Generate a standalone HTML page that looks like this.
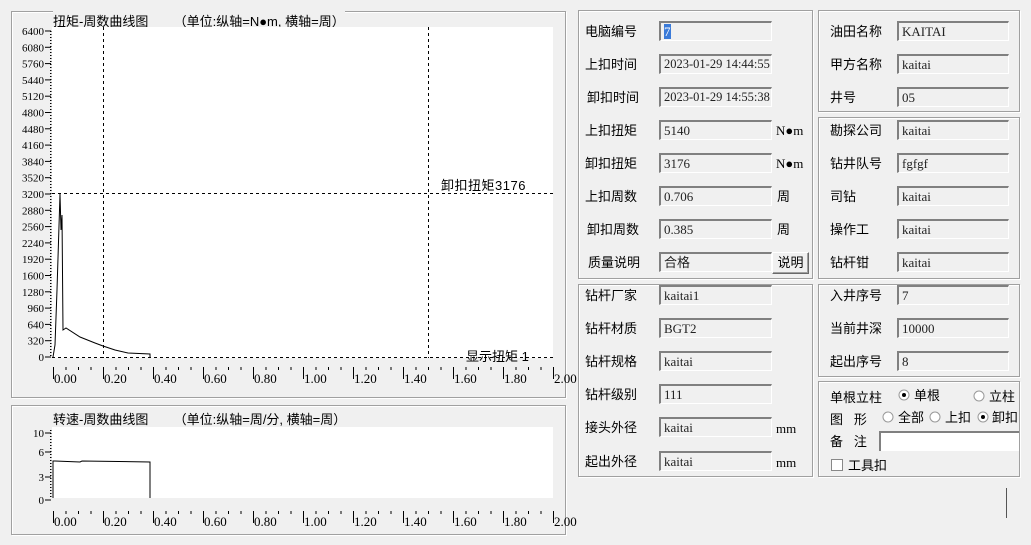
<!DOCTYPE html>
<html><head><meta charset="utf-8">
<style>
*{margin:0;padding:0;box-sizing:border-box}
body{width:1031px;height:545px;background:#f0f0f0;position:relative;overflow:hidden;font-family:"Liberation Sans","Noto Sans CJK SC",sans-serif;font-size:12px;color:#000}
.a{position:absolute;white-space:nowrap}
.p{position:absolute;border:1px solid #a0a0a0;box-shadow:inset 1px 1px 0 #fff,1px 1px 0 #fff}
.l{position:absolute;font-size:13px;line-height:16px;white-space:nowrap}
.i{position:absolute;height:20px;background:#f0f0f0;border-top:2px solid #808080;border-left:2px solid #808080;border-right:1px solid #fff;border-bottom:1px solid #fff;font-family:"Liberation Serif","Noto Sans CJK SC",serif;font-size:13px;line-height:17px;padding-left:3px;color:#222;white-space:nowrap;overflow:hidden}
.u{position:absolute;font-family:"Liberation Serif",serif;font-size:13px}
svg text{font-family:"Liberation Serif",serif;font-size:11px}
svg text.x{font-size:13px}
</style></head><body>

<div class="p" style="left:11px;top:11px;width:555px;height:387px"></div>
<div class="p" style="left:11px;top:405px;width:555px;height:130px"></div>
<div class="a" style="left:53px;top:11px;font-size:13px;background:#f0f0f0">扭矩-周数曲线图&nbsp;&nbsp;&nbsp;&nbsp;&nbsp;&nbsp;&nbsp;（单位:纵轴=N●m, 横轴=周）</div>
<div class="a" style="left:53px;top:409px;font-size:13px">转速-周数曲线图&nbsp;&nbsp;&nbsp;&nbsp;&nbsp;&nbsp;&nbsp;（单位:纵轴=周/分, 横轴=周）</div>

<svg width="1031" height="545" style="position:absolute;left:0;top:0">
<rect x="52" y="27" width="501" height="331" fill="#fff"/>
<rect x="52" y="427" width="501" height="71" fill="#fff"/>
<g stroke="#000" stroke-width="1" fill="none" stroke-dasharray="3,3">
<line x1="103.5" y1="27" x2="103.5" y2="358"/>
<line x1="428.5" y1="27" x2="428.5" y2="358"/>
<line x1="52" y1="193.5" x2="553" y2="193.5"/>
<line x1="52" y1="357.5" x2="553" y2="357.5"/>
</g>
<polyline fill="none" stroke="#000" points="53,357 55,345 57,290 60,194 61,230 62,215 63,330 66,328 80,337 95,343 103,346 115,350 128,353 150,354 150,357"/>
<polyline fill="none" stroke="#000" points="53,498 53,461 55,461 80,462 82,461 150,462 150,498"/>
<g id="tk" stroke="#000" fill="none"></g>
<g id="tx"></g>
</svg>
<div class="a" style="left:441px;top:175px;font-size:13px;letter-spacing:0.5px">卸扣扭矩3176</div>
<div class="a" style="left:466px;top:346px;font-size:13px">显示扭矩 1</div>

<div class="p" style="left:578px;top:10px;width:235px;height:269px"></div>
<div class="p" style="left:578px;top:284px;width:235px;height:193px"></div>
<div class="p" style="left:818px;top:10px;width:202px;height:102px"></div>
<div class="p" style="left:818px;top:117px;width:202px;height:162px"></div>
<div class="p" style="left:818px;top:284px;width:202px;height:93px"></div>
<div class="p" style="left:818px;top:381px;width:202px;height:96px"></div>

<div class="l" style="left:585px;top:24px">电脑编号</div><div class="i" style="left:659px;top:21px;width:113px"><span style="background:#3a7ad8;color:#fff">7</span></div>
<div class="l" style="left:585px;top:57px">上扣时间</div><div class="i" style="left:659px;top:54px;width:113px;font-size:12.5px">2023-01-29 14:44:55</div>
<div class="l" style="left:587px;top:90px">卸扣时间</div><div class="i" style="left:659px;top:87px;width:113px;font-size:12.5px">2023-01-29 14:55:38</div>
<div class="l" style="left:585px;top:123px">上扣扭矩</div><div class="i" style="left:659px;top:120px;width:113px">5140</div><div class="u" style="left:776px;top:123px">N●m</div>
<div class="l" style="left:585px;top:156px">卸扣扭矩</div><div class="i" style="left:659px;top:153px;width:113px">3176</div><div class="u" style="left:776px;top:156px">N●m</div>
<div class="l" style="left:585px;top:189px">上扣周数</div><div class="i" style="left:659px;top:186px;width:113px">0.706</div><div class="l" style="left:777px;top:189px">周</div>
<div class="l" style="left:587px;top:222px">卸扣周数</div><div class="i" style="left:659px;top:219px;width:113px">0.385</div><div class="l" style="left:777px;top:222px">周</div>
<div class="l" style="left:588px;top:255px">质量说明</div><div class="i" style="left:659px;top:252px;width:113px;font-family:'Liberation Sans','Noto Sans CJK SC',sans-serif;font-size:13px">合格</div>
<div class="a" style="left:772px;top:252px;width:37px;height:22px;border:1px solid #fff;border-right-color:#696969;border-bottom-color:#696969;box-shadow:inset -1px -1px 0 #a0a0a0;font-size:13px;text-align:center;line-height:19px">说明</div>

<div class="l" style="left:585px;top:288px">钻杆厂家</div><div class="i" style="left:659px;top:285px;width:113px">kaitai1</div>
<div class="l" style="left:585px;top:321px">钻杆材质</div><div class="i" style="left:659px;top:318px;width:113px">BGT2</div>
<div class="l" style="left:585px;top:354px">钻杆规格</div><div class="i" style="left:659px;top:351px;width:113px">kaitai</div>
<div class="l" style="left:585px;top:387px">钻杆级别</div><div class="i" style="left:659px;top:384px;width:113px">111</div>
<div class="l" style="left:585px;top:420px">接头外径</div><div class="i" style="left:659px;top:417px;width:113px">kaitai</div><div class="u" style="left:776px;top:421px">mm</div>
<div class="l" style="left:585px;top:454px">起出外径</div><div class="i" style="left:659px;top:451px;width:113px">kaitai</div><div class="u" style="left:776px;top:455px">mm</div>

<div class="l" style="left:830px;top:24px">油田名称</div><div class="i" style="left:897px;top:21px;width:112px">KAITAI</div>
<div class="l" style="left:830px;top:57px">甲方名称</div><div class="i" style="left:897px;top:54px;width:112px">kaitai</div>
<div class="l" style="left:830px;top:90px">井号</div><div class="i" style="left:897px;top:87px;width:112px">05</div>
<div class="l" style="left:830px;top:123px">勘探公司</div><div class="i" style="left:897px;top:120px;width:112px">kaitai</div>
<div class="l" style="left:830px;top:156px">钻井队号</div><div class="i" style="left:897px;top:153px;width:112px">fgfgf</div>
<div class="l" style="left:830px;top:189px">司钻</div><div class="i" style="left:897px;top:186px;width:112px">kaitai</div>
<div class="l" style="left:830px;top:222px">操作工</div><div class="i" style="left:897px;top:219px;width:112px">kaitai</div>
<div class="l" style="left:830px;top:255px">钻杆钳</div><div class="i" style="left:897px;top:252px;width:112px">kaitai</div>
<div class="l" style="left:830px;top:288px">入井序号</div><div class="i" style="left:897px;top:285px;width:112px">7</div>
<div class="l" style="left:830px;top:321px">当前井深</div><div class="i" style="left:897px;top:318px;width:112px">10000</div>
<div class="l" style="left:830px;top:354px">起出序号</div><div class="i" style="left:897px;top:351px;width:112px">8</div>

<svg width="1031" height="545" style="position:absolute;left:0;top:0">
<g fill="#fff" stroke="#999">
<circle cx="904" cy="395" r="5"/><circle cx="979" cy="396" r="5"/>
<circle cx="888" cy="417" r="5"/><circle cx="935" cy="417" r="5"/><circle cx="983" cy="417" r="5"/>
</g>
<circle cx="904" cy="395" r="2" fill="#000"/><circle cx="983" cy="417" r="2" fill="#000"/>
<rect x="831.5" y="459.5" width="11" height="11" fill="#fff" stroke="#888"/>
<line x1="1006.5" y1="488" x2="1006.5" y2="518" stroke="#555"/>
</svg>
<div class="l" style="left:830px;top:390px">单根立柱</div>
<div class="l" style="left:914px;top:388px">单根</div>
<div class="l" style="left:989px;top:389px">立柱</div>
<div class="l" style="left:830px;top:412px">图&nbsp;&nbsp;&nbsp;形</div>
<div class="l" style="left:898px;top:410px">全部</div>
<div class="l" style="left:945px;top:410px">上扣</div>
<div class="l" style="left:992px;top:410px">卸扣</div>
<div class="l" style="left:830px;top:434px">备&nbsp;&nbsp;&nbsp;注</div>
<div class="a" style="left:879px;top:431px;width:140px;height:20px;background:#fff;border-top:2px solid #808080;border-left:2px solid #808080"></div>
<div class="l" style="left:848px;top:458px">工具扣</div>

<script>
var tk=document.getElementById('tk'),tx=document.getElementById('tx'),s='',t='';
function L(a,b,c,d){s+='<line x1="'+a+'" y1="'+b+'" x2="'+c+'" y2="'+d+'"/>';}
function T(x,y,v,anc,c){t+='<text'+(c?' class="x"':'')+' x="'+x+'" y="'+y+'" text-anchor="'+(anc||'start')+'">'+v+'</text>';}
[[367,383],[511,526]].forEach(function(r){
 for(var i=0;i<=40;i++){var x=53.5+i*12.5; if(i%4==0){L(x,r[0],x,r[0]+12);}else{L(x,r[0],x,r[0]+3);} }
 for(var i=0;i<=10;i++)T(54+i*50,r[1],(i*0.2).toFixed(2),'start',1);
});
var vals=[6400,6080,5760,5440,5120,4800,4480,4160,3840,3520,3200,2880,2560,2240,1920,1600,1280,960,640,320,0];
for(var y=31;y<=357;y+=3)L(50,y+0.5,51.5,y+0.5);
vals.forEach(function(v){var y=357-v*0.05094;L(45,y,51,y);T(44,y+4,v,'end');});
for(var y=430;y<=498;y+=3)L(50,y+0.5,51.5,y+0.5);
[[10,433],[6,452],[3,477],[0,500]].forEach(function(a){L(45,a[1],51,a[1]);T(44,a[1]+4,a[0],'end');});
tk.innerHTML=s;tx.innerHTML=t;
</script>
</body></html>
